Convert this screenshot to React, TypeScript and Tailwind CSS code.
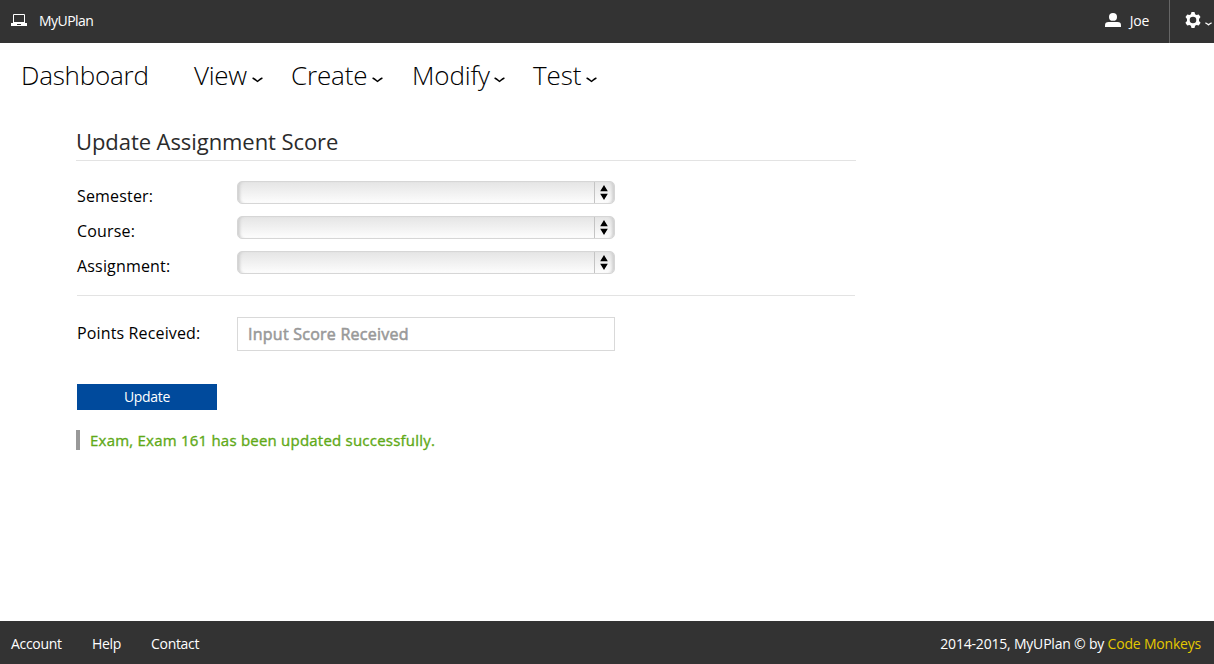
import React from "react";

function Chevron({ className, color }: { className: string; color: string }) {
  return (
    <svg viewBox="0 0 11 6" className={className} fill="none" stroke={color} strokeWidth="1.5">
      <path d="M.6 1C2.5 1.8 4 3.2 5.5 4.4C7 3.2 8.5 1.8 10.4 1" />
    </svg>
  );
}

function TopBar() {
  return (
    <header className="flex h-[43px] shrink-0 items-center bg-[#333333] text-[14px] text-white">
      <svg viewBox="0 0 16 13" className="-mt-[3px] ml-[11px] h-[13px] w-4" fill="#fff">
        <path fillRule="evenodd" d="M2 1Q2 0 3 0H13Q14 0 14 1V9H2ZM3 1V8H13V1Z" />
        <path fillRule="evenodd" d="M0 9H16V12H0ZM6 10V11H10V10Z" />
      </svg>
      <span className="-mt-[3px] ml-3 tracking-[-0.55px]">MyUPlan</span>
      <div className="ml-auto flex h-full items-center border-r border-[#666666] pr-5">
        <svg viewBox="0 0 16 14" className="-mt-[3px] h-[14px] w-4" fill="#fff">
          <ellipse cx="8" cy="3.9" rx="4" ry="3.9" />
          <path d="M0 14V12.2Q0 9 3.5 9H12.5Q16 9 16 12.2V14Z" />
        </svg>
        <span className="-mt-[3px] ml-[9px] tracking-[-0.3px]">Joe</span>
      </div>
      <div className="flex w-11 items-center pl-[15px]">
        <svg viewBox="0 0 16 16" className="-mt-[3px] h-4 w-4 shrink-0" fill="#fff">
          <path
            fillRule="evenodd"
            d="M6.5 0H9.5L10.1 2.3L11.5 3L13.7 2.4L15.5 5.1L14 7V9L15.6 10.8L13.8 13.5L11.5 13L10.1 13.8L9.5 16H6.5L5.9 13.8L4.5 13L2.2 13.5L.4 10.8L2 9V7L.5 5.1L2.3 2.4L4.5 3L5.9 2.3ZM8 4.7A3.3 3.3 0 1 0 8 11.3A3.3 3.3 0 1 0 8 4.7Z"
          />
        </svg>
        <svg viewBox="0 0 7 4" className="ml-1 mt-[4px] h-1 w-[7px] shrink-0" fill="none" stroke="#fff" strokeWidth="1.4">
          <path d="M.4.8C1.6 1.2 2.5 2 3.5 2.8C4.5 2 5.4 1.2 6.6.8" />
        </svg>
      </div>
    </header>
  );
}

function MainNav() {
  return (
    <nav className="flex h-[65px] shrink-0 items-center pl-[21px] text-[26px] font-light text-black">
      <div className="w-[173px] tracking-[-0.22px]">Dashboard</div>
      <div className="flex w-[97px] items-center">
        <span className="tracking-[-0.3px]">View</span>
        <Chevron className="ml-auto mr-[28px] mt-[8px] h-[6px] w-[11px]" color="#000" />
      </div>
      <div className="flex w-[121px] items-center">
        <span className="tracking-[-0.15px]">Create</span>
        <Chevron className="ml-auto mr-[29px] mt-[8px] h-[6px] w-[11px]" color="#000" />
      </div>
      <div className="flex w-[121px] items-center">
        <span className="tracking-[-0.15px]">Modify</span>
        <Chevron className="ml-auto mr-[28px] mt-[8px] h-[6px] w-[11px]" color="#000" />
      </div>
      <div className="flex w-[64px] items-center">
        <span className="tracking-[-0.1px]">Test</span>
        <Chevron className="ml-auto mt-[8px] h-[6px] w-[11px]" color="#000" />
      </div>
    </nav>
  );
}

function SelectRow({ label }: { label: string }) {
  return (
    <div className="flex h-[35px] items-start">
      <span className="w-[160px] pt-[3px] text-[16px] leading-6 tracking-[0.17px] text-black">{label}</span>
      <button
        type="button"
        aria-label={label}
        className="flex h-[23px] w-[378px] justify-end overflow-hidden rounded-[5px] border border-[#d6d6d6] bg-linear-to-b from-[#e5e5e5] to-[#fdfdfd] shadow-[inset_4px_0_3px_-2px_#cfcfcf,inset_-4px_0_3px_-2px_#cfcfcf]"
      >
        <span className="flex h-full w-5 items-center border-l border-[#c4c4c4] pl-[5px]">
          <svg viewBox="0 0 8 15" className="h-[15px] w-2" fill="#000">
            <path d="M4 0L7.8 6.2H.2ZM4 15L.2 8.8H7.8Z" />
          </svg>
        </span>
      </button>
    </div>
  );
}

export default function App() {
  return (
    <div className="flex h-[664px] w-[1214px] flex-col overflow-hidden bg-white font-['Open_Sans','Noto_Sans',sans-serif]">
      <TopBar />
      <MainNav />
      <main className="flex-1 pl-[77px]">
        <h1 className="-ml-px h-[53px] w-[780px] border-b border-[#e3e3e3] pt-[17px] text-[22px] leading-8 tracking-[-0.07px] text-[#2b2b2b]">
          Update Assignment Score
        </h1>
        <div className="h-[135px] w-[778px] border-b border-[#e3e3e3] pt-5">
          <SelectRow label="Semester:" />
          <SelectRow label="Course:" />
          <SelectRow label="Assignment:" />
        </div>
        <div className="flex pt-[21px]">
          <span className="w-[160px] pt-1 text-[16px] leading-6 tracking-[0.14px] text-black">Points Received:</span>
          <input
            className="h-[34px] w-[378px] border border-[#d9d9d9] px-[10px] text-[16px] tracking-[0.25px] text-[#555] outline-none [-webkit-text-stroke:0.55px_#999999] placeholder:text-[#999999] placeholder:opacity-100"
            placeholder="Input Score Received"
          />
        </div>
        <button type="button" className="mt-[33px] block h-[26px] w-[140px] bg-[#004a9c] text-[14px] leading-[26px] tracking-[-0.3px] text-white">
          Update
        </button>
        <p className="-ml-px mt-5 h-5 border-l-4 border-[#999999] pl-[10px] text-[15px] leading-5 tracking-[0.22px] text-[#60a917] [-webkit-text-stroke:0.35px_#60a917]">
          Exam, Exam 161 has been updated successfully.
        </p>
      </main>
      <footer className="flex h-[43px] shrink-0 items-center bg-[#333333] pl-[11px] pr-[13px] pt-[2px] text-[14px] tracking-[-0.3px] text-white">
        <a className="w-[81px]">Account</a>
        <a className="w-[59px]">Help</a>
        <a>Contact</a>
        <p className="ml-auto tracking-[-0.2px]">
          2014-2015, MyUPlan © by <a className="text-[#e3c800]">Code Monkeys</a>
        </p>
      </footer>
    </div>
  );
}
